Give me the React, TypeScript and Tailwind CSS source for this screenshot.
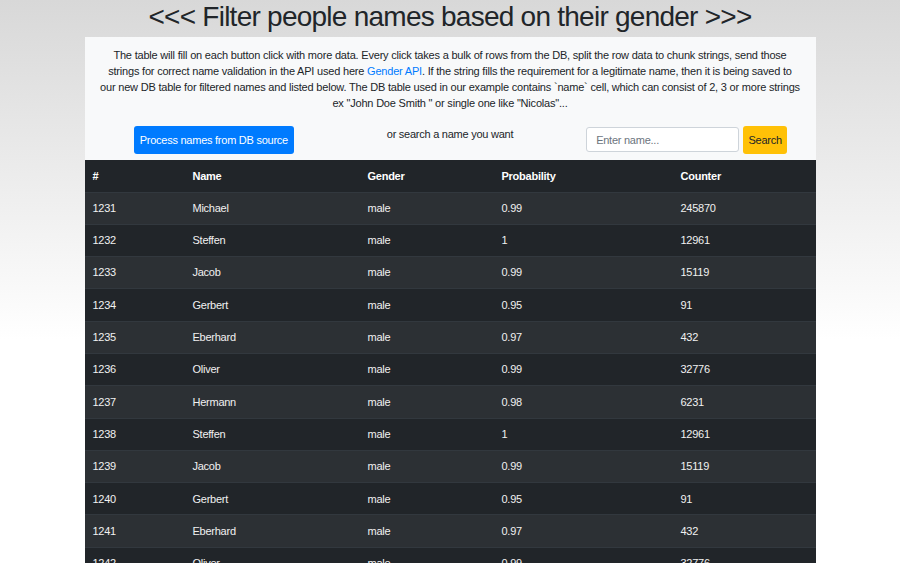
import React from "react";

type Person = {
  id: number;
  name: string;
  gender: string;
  probability: string;
  counter: number;
};

const people: Person[] = [
  { id: 1231, name: "Michael", gender: "male", probability: "0.99", counter: 245870 },
  { id: 1232, name: "Steffen", gender: "male", probability: "1", counter: 12961 },
  { id: 1233, name: "Jacob", gender: "male", probability: "0.99", counter: 15119 },
  { id: 1234, name: "Gerbert", gender: "male", probability: "0.95", counter: 91 },
  { id: 1235, name: "Eberhard", gender: "male", probability: "0.97", counter: 432 },
  { id: 1236, name: "Oliver", gender: "male", probability: "0.99", counter: 32776 },
  { id: 1237, name: "Hermann", gender: "male", probability: "0.98", counter: 6231 },
  { id: 1238, name: "Steffen", gender: "male", probability: "1", counter: 12961 },
  { id: 1239, name: "Jacob", gender: "male", probability: "0.99", counter: 15119 },
  { id: 1240, name: "Gerbert", gender: "male", probability: "0.95", counter: 91 },
  { id: 1241, name: "Eberhard", gender: "male", probability: "0.97", counter: 432 },
  { id: 1242, name: "Oliver", gender: "male", probability: "0.99", counter: 32776 },
  { id: 1243, name: "Hermann", gender: "male", probability: "0.98", counter: 6231 },
];

export default function App() {
  return (
    <div
      className="min-h-[563px] bg-[linear-gradient(to_bottom,#d8d8d8_0px,#ffffff_340px,#ffffff_100%)] text-[#212529] tracking-[-0.25px]"
      style={{ fontFamily: '"Liberation Sans", Arial, sans-serif' }}
    >
      <h1 className="text-center text-[28px] leading-[34px] font-normal tracking-[-0.75px] text-[#212529]">
        &lt;&lt;&lt; Filter people names based on their gender &gt;&gt;&gt;
      </h1>

      <div className="mx-auto w-[731px] mt-[3px]">
        {/* intro and controls */}
        <div className="bg-[#f8f9fa] pt-[10px] pb-[6px]">
          <p className="px-[12px] text-center text-[11px] leading-[16px] tracking-[-0.2px]">
            The table will fill on each button click with more data. Every click takes a bulk of rows from the DB, split the
            row data to chunk strings, send those
            <br />
            strings for correct name validation in the API used here{" "}
            <a className="text-[#007bff]" href="#">
              Gender API
            </a>
            . If the string fills the requirement for a legitimate name, then it is being saved to
            <br />
            our new DB table for filtered names and listed below. The DB table used in our example contains `name` cell,
            which can consist of 2, 3 or more strings
            <br />
            ex "John Doe Smith " or single one like "Nicolas"...
          </p>

          <div className="grid grid-cols-3 mt-[15px] items-start">
            <div className="flex justify-center pl-[15px]">
              <button className="h-[28px] px-[6px] rounded-[3px] bg-[#007bff] text-white text-[11px] tracking-[-0.25px]">
                Process names from DB source
              </button>
            </div>
            <div className="flex justify-center">
              <span className="text-[11px] leading-[16px]">or search a name you want</span>
            </div>
            <div className="flex justify-center gap-[4px] pr-[14px]">
              <input
                className="mt-[1px] w-[153px] h-[25px] border border-[#ced4da] rounded-[3px] bg-white px-[9px] text-[11px] tracking-[-0.25px] placeholder:text-[#6c757d] outline-none"
                placeholder="Enter name..."
              />
              <button className="h-[28px] w-[44px] rounded-[3px] bg-[#ffc107] text-[#212529] text-[11px] tracking-[-0.25px]">
                Search
              </button>
            </div>
          </div>
        </div>

        {/* results table */}
        <table className="w-full table-fixed border-collapse text-[11px] text-[#f1f1f1] bg-[#212529]">
          <colgroup>
            <col className="w-[100px]" />
            <col className="w-[175px]" />
            <col className="w-[134px]" />
            <col className="w-[179px]" />
            <col />
          </colgroup>
          <thead>
            <tr className="h-[32px] bg-[#212529] text-white">
              <th className="text-left font-bold pl-[8px]">#</th>
              <th className="text-left font-bold pl-[8px]">Name</th>
              <th className="text-left font-bold pl-[8px]">Gender</th>
              <th className="text-left font-bold pl-[8px]">Probability</th>
              <th className="text-left font-bold pl-[8px]">Counter</th>
            </tr>
          </thead>
          <tbody>
            {people.map((p, i) => (
              <tr
                key={p.id}
                className={`h-[32.3px] border-t border-[#32383e] ${i % 2 === 0 ? "bg-[#2c3034]" : "bg-[#212529]"}`}
              >
                <td className="pl-[8px]">{p.id}</td>
                <td className="pl-[8px]">{p.name}</td>
                <td className="pl-[8px]">{p.gender}</td>
                <td className="pl-[8px]">{p.probability}</td>
                <td className="pl-[8px]">{p.counter}</td>
              </tr>
            ))}
          </tbody>
        </table>
      </div>
    </div>
  );
}
